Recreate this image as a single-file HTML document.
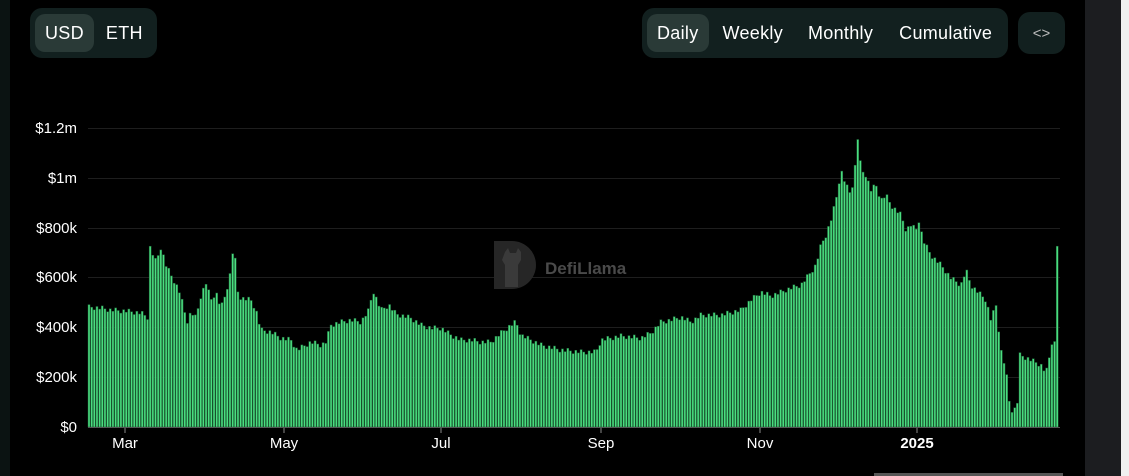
<!DOCTYPE html>
<html><head><meta charset="utf-8"><style>
body{margin:0;width:1129px;height:476px;background:#000;overflow:hidden;font-family:"Liberation Sans",sans-serif;position:relative}
.grp{position:absolute;background:#12201f;border-radius:12px;display:flex;align-items:center;padding:0 5px;box-sizing:border-box}
.b{color:#fff;font-size:18px;padding:0 10px;height:38px;line-height:38px;border-radius:10px;letter-spacing:0.3px}
.on{background:#2a3a37}
</style></head><body>
<div style="position:absolute;left:0;top:0;width:10px;height:476px;background:#0b1312"></div>
<div style="position:absolute;left:1085px;top:0;width:36px;height:476px;background:#1c1d20"></div>
<div style="position:absolute;left:1121px;top:0;width:8px;height:476px;background:#f0f0f0"></div>
<div style="position:absolute;left:874px;top:473px;width:189px;height:3px;background:#555"></div>
<div class="grp" style="left:30px;top:8px;width:127px;height:50px"><span class="b on">USD</span><span class="b" style="padding-left:12px">ETH</span></div>
<div class="grp" style="left:642px;top:8px;width:366px;height:50px"><span class="b on">Daily</span><span class="b" style="padding-left:14px">Weekly</span><span class="b" style="padding-left:15px">Monthly</span><span class="b" style="padding-left:16px">Cumulative</span></div>
<div class="grp" style="left:1018px;top:12px;width:47px;height:42px;justify-content:center;color:#bbb;font-size:15px">&lt;&gt;</div>
<svg id="c" width="1129" height="476" style="position:absolute;left:0;top:0">
<g font-size="15" fill="#fff" text-anchor="end">
<text x="77" y="133">$1.2m</text><text x="77" y="183">$1m</text><text x="77" y="233">$800k</text><text x="77" y="282">$600k</text><text x="77" y="332">$400k</text><text x="77" y="382">$200k</text><text x="77" y="432">$0</text>
</g>
<g stroke="#1e1e1e" stroke-width="1">
<line x1="88" x2="1060" y1="128.5" y2="128.5"/><line x1="88" x2="1060" y1="178.5" y2="178.5"/><line x1="88" x2="1060" y1="228.5" y2="228.5"/><line x1="88" x2="1060" y1="277.5" y2="277.5"/><line x1="88" x2="1060" y1="327.5" y2="327.5"/><line x1="88" x2="1060" y1="377.5" y2="377.5"/>
</g>
<path d="M494 241 H512 A24 24 0 0 1 512 289 H494 Z" fill="#262626"/>
<path d="M505 252 l3 -4 l2 5 h6 l2 -5 l3 4 v8 l-3 5 v22 h-13 v-22 l-3 -5 z" fill="#3a3a3a"/>
<text x="545" y="274" font-size="17" font-weight="bold" fill="#4a4a4a">DefiLlama</text>
<g id="bars"></g>
<line x1="88" x2="1060" y1="427.5" y2="427.5" stroke="#555"/>
<g font-size="15" fill="#fff" text-anchor="middle">
<text x="125" y="448">Mar</text><text x="284" y="448">May</text><text x="441" y="448">Jul</text><text x="601" y="448">Sep</text><text x="760" y="448">Nov</text><text x="917" y="448" font-weight="bold">2025</text>
</g>
<g stroke="#888"><line x1="125" x2="125" y1="428" y2="433"/><line x1="284" x2="284" y1="428" y2="433"/><line x1="441" x2="441" y1="428" y2="433"/><line x1="601" x2="601" y1="428" y2="433"/><line x1="760" x2="760" y1="428" y2="433"/><line x1="917" x2="917" y1="428" y2="433"/></g>
</svg>
<script>
var k=[[88,307],[100,308],[110,310],[125,311],[140,313],[148,318],[149,247],[155,262],[160,247],[165,265],[170,275],[178,290],[182,305],[186,322],[190,312],[195,318],[200,295],[205,283],[210,300],[215,292],[220,308],[225,293],[230,270],[233,238],[236,290],[240,298],[250,300],[255,310],[260,330],[270,332],[280,338],[290,340],[296,350],[310,342],[320,345],[325,342],[330,325],[340,322],[350,320],[360,322],[368,310],[372,290],[380,310],[388,305],[395,314],[410,318],[420,325],[430,328],[440,328],[450,335],[460,340],[470,340],[480,342],[490,342],[500,333],[510,325],[515,322],[520,335],[530,340],[540,345],[560,350],[580,352],[595,352],[600,340],[620,336],[640,338],[650,333],[660,322],[670,320],[680,317],[690,322],[700,315],[720,315],[740,310],[750,300],[760,292],[770,296],[780,292],[790,288],[800,285],[810,272],[815,265],[820,245],[825,235],[830,220],[835,200],[840,170],[845,185],[850,195],[855,160],[857,135],[860,170],[865,175],[870,190],[875,185],[880,200],[885,195],[890,205],[895,210],[900,215],[905,230],[910,225],[915,230],[918,220],[922,240],[930,255],[940,265],[950,278],[960,285],[965,270],[970,285],[980,295],[985,300],[990,320],[995,305],[1000,350],[1005,370],[1008,400],[1011,410],[1016,408],[1019,355],[1030,360],[1040,365],[1045,373],[1048,360],[1050,342],[1055,343],[1056,245],[1058,245]];
function f(x){for(var i=0;i<k.length-1;i++){if(x>=k[i][0]&&x<=k[i+1][0]){var t=(x-k[i][0])/(k[i+1][0]-k[i][0]||1);return k[i][1]+t*(k[i+1][1]-k[i][1]);}}return k[k.length-1][1];}
var s='',n=0;for(var x=88;x<1058;x+=2.66){var y=f(x)+((n*7)%5-2)*1.2;n++;s+='<rect x="'+x.toFixed(2)+'" y="'+y.toFixed(1)+'" width="2" height="'+(427-y).toFixed(1)+'" fill="#4ade80" stroke="#1d5e35" stroke-width="0.5"/>';}
document.getElementById('bars').innerHTML=s;
</script>
</body></html>
